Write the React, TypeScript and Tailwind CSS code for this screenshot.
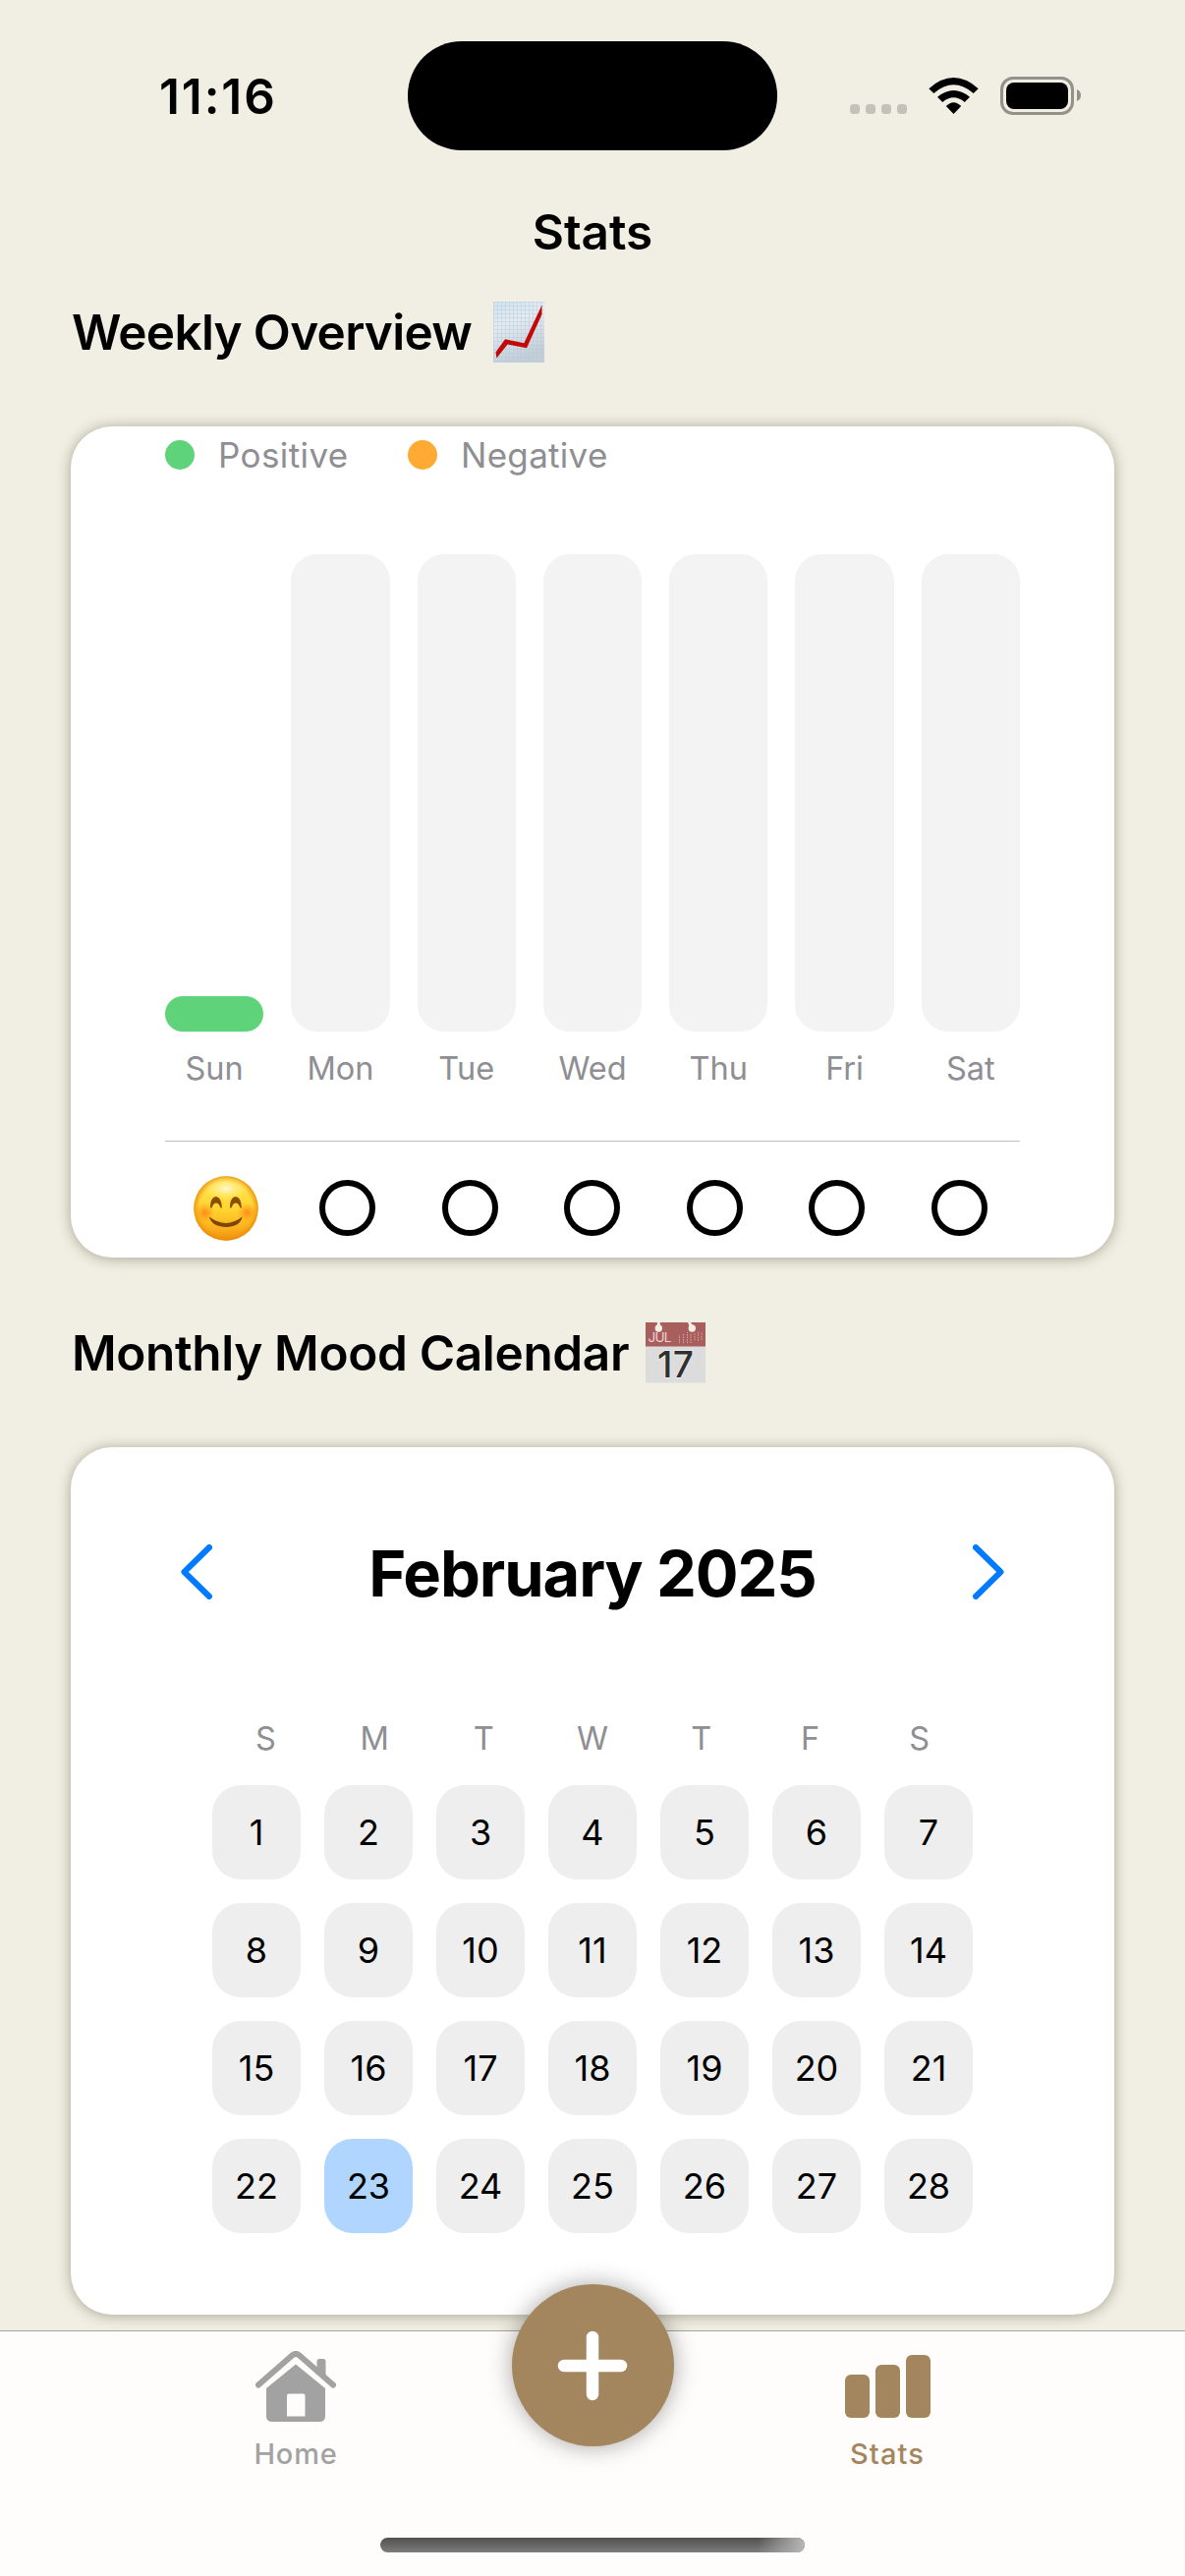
const days = ['Sun', 'Mon', 'Tue', 'Wed', 'Thu', 'Fri', 'Sat'];
const initials = ['S', 'M', 'T', 'W', 'T', 'F', 'S'];
const dates = Array.from({ length: 28 }, (_, i) => i + 1);

const card = 'mx-[72px] rounded-[42px] bg-white shadow-[0_1px_14px_rgba(60,60,30,0.42)]';

function StatusBar() {
  return (
    <div className="flex h-[194px] items-start">
      <div className="w-[415px] pt-[67px] pl-[162px] text-[49.5px] leading-[62px] font-semibold tracking-[1.9px]">11:16</div>
      <div className="mt-[41.5px] h-[111px] w-[376px] rounded-[55px] bg-black" />
      <svg className="mt-[60px] ml-[49px]" width="280" height="80" viewBox="0 0 280 80">
        <g fill="#c4c2b8">
          <rect x="25" y="46" width="10" height="10" rx="3.5" />
          <rect x="41" y="46" width="10" height="10" rx="3.5" />
          <rect x="57" y="46" width="10" height="10" rx="3.5" />
          <rect x="73" y="46" width="10" height="10" rx="3.5" />
        </g>
        <path d="M105.300 30.200Q130.500 8 155.700 30.200L150.700 34.900Q130.500 17.500 110.300 34.900Z" />
        <path d="M114 38.800Q130.500 25.300 147 38.800L141.700 43.900Q130.500 34.600 119.300 43.900Z" />
        <path d="M122.800 48Q130.500 40.400 138.200 48L130.500 56Z" />
        <rect x="179.500" y="19.500" width="72" height="36" rx="11.500" fill="none" stroke="#92918a" strokeWidth="3" />
        <rect x="184" y="24" width="63" height="27" rx="8" />
        <path d="M256 31q4 1.700 4 6t-4 6z" fill="#92918a" />
      </svg>
    </div>
  );
}

function ChartEmoji() {
  return (
    <svg width="52" height="62" viewBox="0 0 52 62">
      <defs>
        <linearGradient id="paper" x1="0" y1="0" x2="0.300" y2="1">
          <stop offset="0" stopColor="#d3e3ef" />
          <stop offset="0.400" stopColor="#e6ebef" />
          <stop offset="1" stopColor="#c6ced5" />
        </linearGradient>
        <pattern id="lines" width="4" height="4" patternUnits="userSpaceOnUse">
          <path d="M0 .5H4M.5 0V4" stroke="#a9c8e2" strokeOpacity=".4" />
        </pattern>
      </defs>
      <rect width="52" height="62" fill="url(#paper)" />
      <rect width="52" height="62" fill="url(#lines)" />
      <path d="M2.500 51.500L3.500 57.500L14.600 43.500L34 47.300L49.500 13V3.500L31.300 42.300L12 38.300Z" fill="#c30808" />
    </svg>
  );
}

function CalendarEmoji() {
  return (
    <svg className="overflow-visible" width="62" height="70" viewBox="0 0 62 70">
      <rect y="24" width="61" height="37.500" fill="#dcdcdc" />
      <rect y="0" width="61" height="24.500" fill="#a95e5e" />
      <g fill="#f1efe3">
        <circle cx="13.300" cy="6" r="3.700" />
        <rect x="11.800" y="0" width="3" height="4" />
        <circle cx="47.300" cy="6" r="3.700" />
        <path d="M43 0h3l2 3-3 2z" />
      </g>
      <g stroke="#d5a5a5" strokeWidth="1" strokeDasharray="1.500 1">
        <path d="M34.500 21v-8M38.500 21v-10M42.500 21v-11M46 21v-9M50 18v-7M53.500 19v-9M57 18v-8" />
      </g>
      <text x="2.500" y="20.200" fontFamily="Inter" fontSize="13.500" textLength="24" fill="#ebd3d3">JUL</text>
      <text x="12" y="55.500" fontFamily="Inter" fontSize="37" fontWeight="500" textLength="37" fill="#303030" stroke="#f3f3f3" strokeWidth="1.500" paintOrder="stroke">17</text>
    </svg>
  );
}

function SmileEmoji() {
  return (
    <svg width="66" height="66" viewBox="0 0 66 66">
      <defs>
        <linearGradient id="face" x1="0" y1="0" x2="0" y2="1">
          <stop offset="0" stopColor="#ffe55c" />
          <stop offset="0.500" stopColor="#fed631" />
          <stop offset="0.800" stopColor="#fcb11c" />
          <stop offset="1" stopColor="#ee8f10" />
        </linearGradient>
        <radialGradient id="rim">
          <stop offset="0.800" stopColor="#f79a0c" stopOpacity="0" />
          <stop offset="1" stopColor="#e98a0c" stopOpacity=".85" />
        </radialGradient>
        <radialGradient id="shine" cy="0.450">
          <stop offset="0" stopColor="#fffce8" stopOpacity=".9" />
          <stop offset="1" stopColor="#ffef50" stopOpacity="0" />
        </radialGradient>
        <radialGradient id="blush">
          <stop offset="0" stopColor="#ff7a14" stopOpacity=".8" />
          <stop offset="1" stopColor="#ff8a14" stopOpacity="0" />
        </radialGradient>
      </defs>
      <circle cx="33" cy="33" r="32.800" fill="url(#face)" />
      <circle cx="33" cy="33" r="32.800" fill="url(#rim)" />
      <ellipse cx="33" cy="14" rx="23" ry="13" fill="url(#shine)" />
      <circle cx="11.500" cy="37" r="10" fill="url(#blush)" />
      <circle cx="54.500" cy="37" r="10" fill="url(#blush)" />
      <path d="M17 31.500C17 17.500 28.500 17.500 28.800 31.500C29 33 27.500 33 27 31.500C25.500 26 20.500 26 19 31.500C18.500 33 17 33 17 31.500ZM37 31.500C37 17.500 48.500 17.500 48.800 31.500C49 33 47.500 33 47 31.500C45.500 26 40.500 26 39 31.500C38.500 33 37 33 37 31.500Z" fill="#8c4e05" />
      <path d="M16 41.500Q33 54.500 49.500 41.500C48 55.500 18.500 55.500 16 41.500Z" fill="#7e4503" />
    </svg>
  );
}

function WeeklyCard() {
  return (
    <section className={card + ' h-[846px] px-24 pt-[14px]'}>
      <div className="flex h-[30px] items-center text-[35px] leading-[30px] text-[#8e8e93]">
        <span className="size-[30px] rounded-full bg-[#5fd37a]" />
        <span className="ml-[24px] w-[193px] tracking-[0.4px]">Positive</span>
        <span className="size-[30px] rounded-full bg-[#ffaa33]" />
        <span className="ml-[24px] tracking-[0.3px]">Negative</span>
      </div>
      <div className="mt-[86px] grid grid-cols-7 gap-x-7 text-center text-[32.500px] leading-[40px] text-[#8e8e93]">
        {days.map((d, i) => (
          <div key={d}>
            <div className="flex h-[486px] flex-col justify-end">
              {i === 0 ? <div className="h-9 rounded-[18px] bg-[#5fd37a]" /> : <div className="h-full rounded-[27px] bg-[#f3f3f3]" />}
            </div>
            <div className="mt-[18px]">{d}</div>
          </div>
        ))}
      </div>
      <div className="mt-[53px] h-px bg-[#c0c0c2]" />
      <div className="mt-[35px] flex h-[66px] items-start pl-[29px]">
        <SmileEmoji />
        <div className="mt-[4px] ml-[62px] flex gap-[67.500px]">
          {days.slice(1).map((d) => (
            <span key={d} className="size-[57px] rounded-full border-[6px] border-black" />
          ))}
        </div>
      </div>
    </section>
  );
}

function Chevron({ flip = false }: { flip?: boolean }) {
  return (
    <svg width="32" height="56" viewBox="0 0 32 56" className={flip ? 'rotate-180' : ''}>
      <path d="M29 3L3.500 28L29 53" fill="none" stroke="#007aff" strokeWidth="6" strokeLinecap="round" strokeLinejoin="round" />
    </svg>
  );
}

function CalendarCard() {
  return (
    <section className={card + ' h-[883px] pt-[89px]'}>
      <div className="flex h-[80px] items-center justify-between px-[112px]">
        <div className="-mt-[4px]"><Chevron /></div>
        <h2 className="text-[65px] leading-[80px] font-bold tracking-[-1.1px]">February 2025</h2>
        <div className="-mt-[4px]"><Chevron flip /></div>
      </div>
      <div className="mx-[143px] mt-[108px] grid grid-cols-7 text-center text-[32.500px] leading-[40px] text-[#8e8e93]">
        {initials.map((d, i) => (
          <span key={i}>{d}</span>
        ))}
      </div>
      <div className="mx-[144px] mt-[27px] grid grid-cols-7 gap-6 text-[36px]">
        {dates.map((n) => (
          <div key={n} className={'flex h-24 items-center justify-center rounded-[29px] ' + (n === 23 ? 'bg-[#b0d6ff]' : 'bg-[#eeeeee]')}>
            {n}
          </div>
        ))}
      </div>
    </section>
  );
}

function TabBar() {
  return (
    <nav className="relative mt-[16px] h-[250px] border-t border-[#a5a598] bg-[#fefdfb]">
      <div className="flex justify-between pr-[202px] pl-[200px] text-[29px] leading-[36px] font-medium tracking-[0.8px]">
        <div className="flex w-[202px] flex-col items-center pt-[20px] text-[#a2a2a2]">
          <svg width="82" height="73" viewBox="0 0 82 73" fill="#a2a2a2">
            <path d="M62.500 20V10.500q0-2.500 2.500-2.500h4q2.500 0 2.500 2.500V30z" />
            <path d="M3 34.500L37.500 4.300Q41 1.500 44.500 4.300L79 34.500" fill="none" stroke="#a2a2a2" strokeWidth="6" strokeLinecap="round" />
            <path fillRule="evenodd" d="M41 13.500L71 38V66q0 6-6 6H17q-6 0-6-6V38ZM34 43.500q-2 0-2 2V66.500H50.500V45.500q0-2-2-2Z" />
          </svg>
          <span className="mt-[14px]">Home</span>
        </div>
        <div className="flex w-[202px] flex-col items-center pt-[24px] text-[#a3855e]">
          <div className="flex h-[64px] items-end gap-[6px]">
            <span className="h-[44px] w-[25px] rounded-[6px] bg-[#a3855e]" />
            <span className="h-[54px] w-[25px] rounded-[6px] bg-[#a3855e]" />
            <span className="h-[64px] w-[25px] rounded-[6px] bg-[#a3855e]" />
          </div>
          <span className="mt-[19px] tracking-[1.100px]">Stats</span>
        </div>
      </div>
      <button className="absolute top-[-48px] left-[520.500px] flex size-[165px] items-center justify-center rounded-full bg-[#a3855e] shadow-[0_0_24px_rgba(0,0,0,0.35)]">
        <svg width="72" height="72" viewBox="0 0 72 72" stroke="#fff" strokeWidth="12.500" strokeLinecap="round">
          <path d="M36 7V65M7 36H65" />
        </svg>
      </button>
      <div className="absolute top-[210px] left-[387px] h-[15px] w-[432px] overflow-hidden rounded-full bg-linear-to-b from-[#505050] to-[#7d7d7d]">
        <div className="ml-auto h-full w-12 bg-linear-to-r from-transparent to-[#b8b8b8]" />
      </div>
    </nav>
  );
}

export default function App() {
  return (
    <main className="h-[2622px] w-[1206px] overflow-hidden bg-[#f1efe3] font-['Inter',sans-serif] text-black">
      <StatusBar />
      <h1 className="h-[84px] pt-[11px] text-center text-[49.500px] leading-[62px] font-semibold tracking-[0px]">Stats</h1>
      <div className="flex h-[156px] items-start pt-[29px] pl-[73px]">
        <h2 className="w-[429px] text-[49.500px] leading-[62px] font-semibold tracking-[-0.7px]">Weekly Overview</h2>
        <ChartEmoji />
      </div>
      <WeeklyCard />
      <div className="flex h-[193px] items-start pt-[66px] pl-[73px]">
        <h2 className="w-[583.500px] text-[49.500px] leading-[62px] font-semibold tracking-[-0.350px]">Monthly Mood Calendar</h2>
        <CalendarEmoji />
      </div>
      <CalendarCard />
      <TabBar />
    </main>
  );
}
